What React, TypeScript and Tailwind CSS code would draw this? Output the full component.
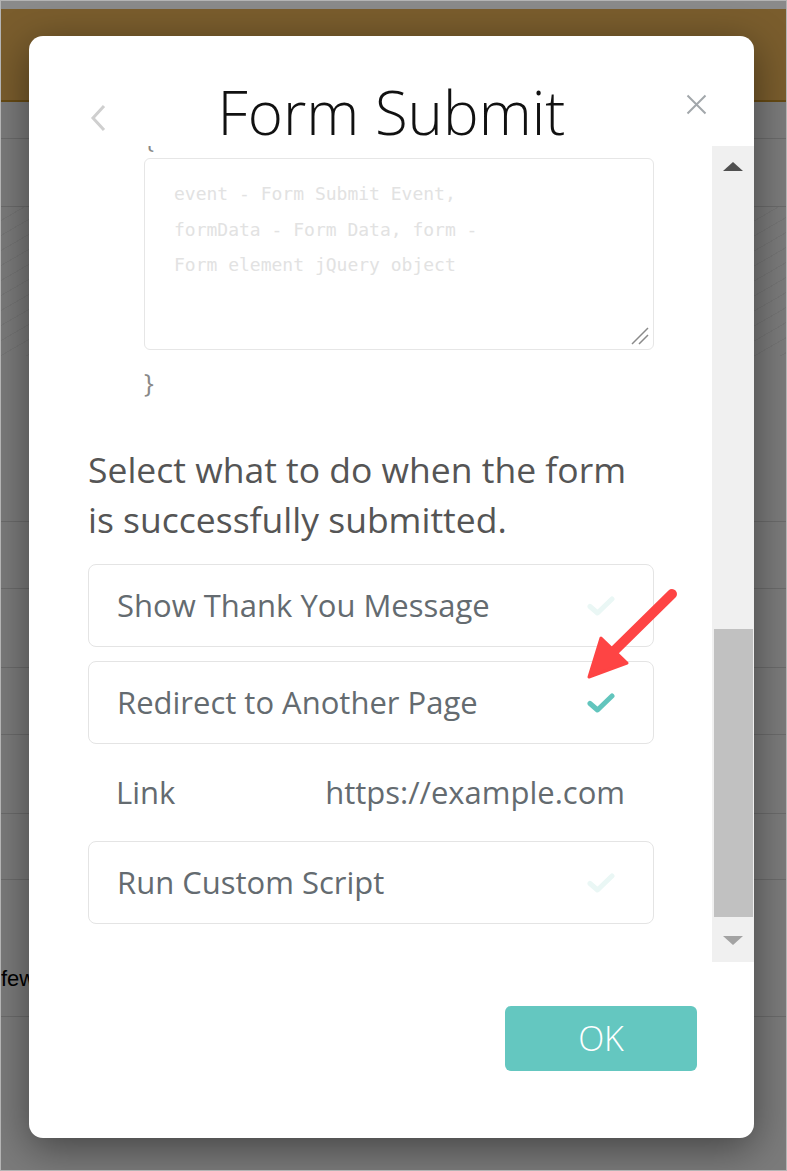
import React from "react";

const Check = ({ color }: { color: string }) => (
  <svg width="28" height="20" viewBox="0 0 28 20" fill="none">
    <path d="M3 10.5 L10.5 17 L25 3" stroke={color} strokeWidth="5" strokeLinecap="round" strokeLinejoin="round" />
  </svg>
);

const Card = ({ label, active }: { label: string; active?: boolean }) => (
  <div className="flex h-[83px] items-center justify-between rounded-[8px] border border-[#e4e4e4] pl-[28px] pr-[38px]">
    <span className="text-[31px] text-[#646b70]">{label}</span>
    <Check color={active ? "#62c5bd" : "#eaf7f5"} />
  </div>
);

export default function App() {
  const lines = [137, 205, 520, 587, 666, 733, 812, 878, 1015];
  return (
    <div
      className="relative h-[1171px] w-[787px] overflow-hidden border border-[#b4b4b4] bg-[#7b7b7b]"
      style={{ fontFamily: '"Open Sans", "Noto Sans", sans-serif' }}
    >
      {/* backdrop page */}
      <div className="h-[8px] bg-[#8a8a8a]" />
      <div className="h-[91px] bg-[#7a5d2d]" />
      <div className="h-[2px] bg-[#664a14]" />
      <div className="relative h-[1070px]">
        {lines.map((y) => (
          <div key={y} className="absolute left-0 right-0 h-px bg-[#6b6b6b]" style={{ top: y - 101 }} />
        ))}
        <div
          className="absolute left-0 right-0 top-[104px] h-[150px] opacity-40"
          style={{ backgroundImage: "repeating-linear-gradient(150deg, transparent 0 12px, #6c6c6c 12px 13px)" }}
        />
        <div className="absolute left-0 top-[860px] text-[22px] text-black" style={{ fontFamily: '"Liberation Sans", Arial, sans-serif' }}>
          few
        </div>
      </div>

      {/* modal */}
      <div className="absolute left-[28px] top-[35px] flex h-[1102px] w-[725px] flex-col rounded-[14px] bg-white shadow-[0_10px_40px_rgba(0,0,0,0.45)]">
        {/* header */}
        <div className="relative flex h-[110px] items-end justify-center">
          <h1 className="pb-[4px] text-[60px] font-light leading-[1] text-[#111]">Form Submit</h1>
          <svg className="absolute left-[60px] top-[68px]" width="18" height="28" viewBox="0 0 18 28" fill="none">
            <path d="M15 2 L4 14 L15 26" stroke="#cfcfcf" strokeWidth="3" />
          </svg>
          <svg className="absolute right-[47px] top-[58px]" width="21" height="21" viewBox="0 0 21 21" fill="none">
            <path d="M1.5 1.5 L19.5 19.5 M19.5 1.5 L1.5 19.5" stroke="#a2a7ab" strokeWidth="2" />
          </svg>
        </div>

        {/* scroll region */}
        <div className="flex h-[816px] overflow-hidden">
          <div className="w-[626px] overflow-hidden pl-[59px]">
            <div className="-mt-[22px] w-[566px]">
              <div className="pl-[57px] text-[24px] leading-[30px] text-[#888]">{"{"}</div>
              <div className="relative ml-[56px] mt-[4px] h-[192px] rounded-[6px] border border-[#e6e6e6] px-[29px] pt-[17px]">
                <div
                  className="text-[18px] leading-[35.5px] text-[#e2e2e2]"
                  style={{ fontFamily: '"DejaVu Sans Mono", "Liberation Mono", monospace' }}
                >
                  event - Form Submit Event,
                  <br />
                  formData - Form Data, form -
                  <br />
                  Form element jQuery object
                </div>
                <svg className="absolute bottom-[3px] right-[3px]" width="20" height="20" viewBox="0 0 20 20" fill="none">
                  <path d="M2 18 L18 2 M9 18 L18 9" stroke="#8a8a8a" strokeWidth="1.5" />
                </svg>
              </div>
              <div className="mt-[14px] pl-[56px] text-[26px] leading-[36px] text-[#888]">{"}"}</div>
              <p className="mt-[44px] max-w-[560px] text-[35.5px] leading-[50px] text-[#555]">
                Select what to do when the form is successfully submitted.
              </p>
              <div className="mt-[20px] flex flex-col">
                <Card label="Show Thank You Message" />
                <div className="mt-[14px]">
                  <Card label="Redirect to Another Page" active />
                </div>
                <div className="flex h-[97px] items-center justify-between pl-[28px] pr-[29px] text-[31px] text-[#646b70]">
                  <span>Link</span>
                  <span>https://example.com</span>
                </div>
                <Card label="Run Custom Script" />
              </div>
            </div>
          </div>
          {/* scrollbar */}
          <div className="ml-[57px] flex w-[42px] flex-col bg-[#f0f0f0]">
            <div className="flex h-[40px] items-center justify-center">
              <svg width="20" height="9" viewBox="0 0 20 9"><path d="M0 9 L10 0 L20 9 Z" fill="#505050" /></svg>
            </div>
            <div className="flex-1 pl-[2px] pr-[1px]">
              <div className="mt-[443px] h-[288px] bg-[#c1c1c1]" />
            </div>
            <div className="flex h-[44px] items-center justify-center">
              <svg width="20" height="9" viewBox="0 0 20 9"><path d="M0 0 L10 9 L20 0 Z" fill="#a3a3a3" /></svg>
            </div>
          </div>
        </div>

        {/* footer */}
        <div className="flex justify-end pr-[57px] pt-[44px]">
          <button className="h-[65px] w-[192px] rounded-[6px] bg-[#64c7c0] text-[34px] font-light text-white">OK</button>
        </div>
      </div>

      {/* annotation arrow */}
      <svg className="absolute left-0 top-0" width="787" height="1171" viewBox="0 0 787 1171" fill="none">
        <path d="M671 593 L611 652" stroke="#fe4444" strokeWidth="10" strokeLinecap="round" />
        <path d="M600 637 L588 676 L626 662 Z" fill="#fe4444" stroke="#fe4444" strokeWidth="3" strokeLinejoin="round" />
      </svg>
    </div>
  );
}
